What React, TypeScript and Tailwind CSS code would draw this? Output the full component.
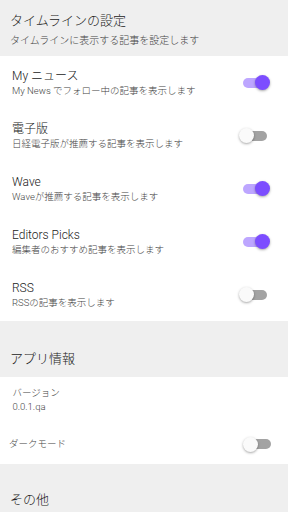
import React from "react";

const font = { fontFamily: "Roboto, 'Noto Sans CJK JP', sans-serif" };

function Toggle({ on, className = "" }: { on: boolean; className?: string }) {
  return (
    <div className={`relative w-[31px] h-[15px] shrink-0 ${className}`}>
      <div
        className={`absolute left-[4px] top-[2.5px] w-[24px] h-[10px] rounded-full ${
          on ? "bg-[#bda6ff]" : "bg-[#a3a3a3]"
        }`}
      />
      <div
        className={`absolute top-0 w-[15px] h-[15px] rounded-full shadow-[0_1px_2.5px_rgba(0,0,0,0.35)] ${
          on ? "left-[16px] bg-[#7c4dff]" : "left-0 bg-[#fafafa]"
        }`}
      />
    </div>
  );
}

const items = [
  { t: "My ニュース", s: "My News でフォロー中の記事を表示します", on: true },
  { t: "電子版", s: "日経電子版が推薦する記事を表示します", on: false },
  { t: "Wave", s: "Waveが推薦する記事を表示します", on: true },
  { t: "Editors Picks", s: "編集者のおすすめ記事を表示します", on: true },
  { t: "RSS", s: "RSSの記事を表示します", on: false },
];

export default function App() {
  return (
    <div className="w-[288px] h-[512px] overflow-hidden bg-[#efefef] font-light" style={font}>
      <div className="h-[56px] pt-[12px] pl-[10px]">
        <div className="text-[13px] leading-[18px] text-[#222]">タイムラインの設定</div>
        <div className="mt-[4px] text-[10px] leading-[14px] text-[#444]">
          タイムラインに表示する記事を設定します
        </div>
      </div>
      <div className="bg-white">
        {items.map((it) => (
          <div key={it.t} className="h-[53px] flex items-center pl-[12px] pr-[18px]">
            <div className="flex-1">
              <div className="text-[12px] leading-[16px] text-[#222]">{it.t}</div>
              <div className="text-[9.5px] leading-[14px] text-[#444]">{it.s}</div>
            </div>
            <Toggle on={it.on} />
          </div>
        ))}
      </div>
      <div className="h-[56px] pt-[29px] pl-[10px]">
        <div className="text-[13px] leading-[18px] text-[#222]">アプリ情報</div>
      </div>
      <div className="bg-white">
        <div className="pt-[9px] pb-[10px] pl-[12.5px]">
          <div className="text-[9.5px] leading-[14px] text-[#444]">バージョン</div>
          <div className="text-[9.5px] leading-[14px] text-[#444]">0.0.1.qa</div>
        </div>
        <div className="h-[40px] flex items-center pl-[9px] pr-[14px]">
          <div className="flex-1 text-[9.5px] leading-[14px] text-[#444]">ダークモード</div>
          <Toggle on={false} />
        </div>
      </div>
      <div className="pt-[27px] pl-[10px]">
        <div className="text-[13px] leading-[18px] text-[#222]">その他</div>
      </div>
    </div>
  );
}
